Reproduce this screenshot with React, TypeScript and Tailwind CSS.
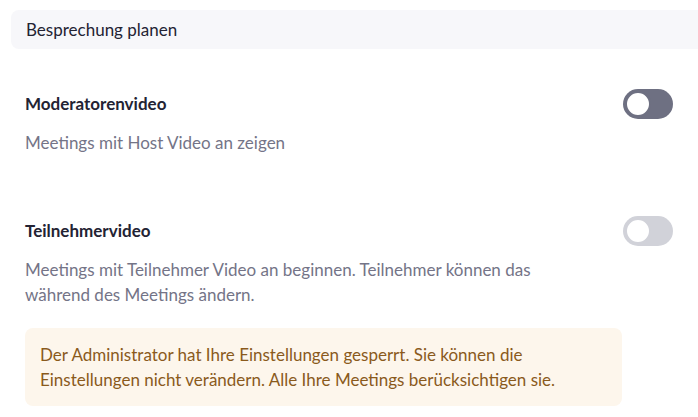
import React from 'react';

const Toggle = ({ disabled }: { disabled?: boolean }) => (
    <div
        className={`flex h-[30px] w-[50px] shrink-0 items-center rounded-full px-[2px] ${
            disabled ? 'bg-[#d1d2d9]' : 'bg-[#6e7082]'
        }`}
    >
        <div
            className={`h-[26px] w-[26px] rounded-full bg-white border-2 ${
                disabled ? 'border-[#d1d2d9]' : 'border-[#6e7082]'
            }`}
        />
    </div>
);

const Setting = ({ title, desc, disabled }: { title: string; desc: string; disabled?: boolean }) => (
    <div className="flex flex-col">
        <div className="flex h-[24px] items-center justify-between">
            <h3 className="text-[17px] leading-[24px] font-bold text-[#232333]">{title}</h3>
            <Toggle disabled={disabled} />
        </div>
        <p className="mt-[14px] max-w-[560px] text-[17px] leading-[25px] text-[#747487]">{desc}</p>
    </div>
);

export default function App() {
    return (
        <div
            className="h-[417px] w-[698px] overflow-hidden bg-white"
            style={{ fontFamily: 'Lato, "Open Sans", sans-serif' }}
        >
            <div className="ml-[11px] mt-[10px] flex h-[39px] items-center rounded-l-[8px] bg-[#f7f7fa] pl-[15px]">
                <span className="text-[17px] text-[#232333]">Besprechung planen</span>
            </div>

            <div className="ml-[25px] mr-[25px] mt-[43px] flex flex-col">
                <Setting title="Moderatorenvideo" desc="Meetings mit Host Video an zeigen" />
                <div className="h-[64px]" />
                <Setting
                    title="Teilnehmervideo"
                    desc="Meetings mit Teilnehmer Video an beginnen. Teilnehmer können das während des Meetings ändern."
                    disabled
                />
                <div className="mt-[21px] mr-[51px] rounded-[8px] bg-[#fdf6ec] px-[15px] py-[14px] text-[17px] leading-[25px] text-[#8a5a1c]">
                    Der Administrator hat Ihre Einstellungen gesperrt. Sie können die Einstellungen nicht verändern. Alle Ihre Meetings berücksichtigen sie.
                </div>
            </div>
        </div>
    );
}
